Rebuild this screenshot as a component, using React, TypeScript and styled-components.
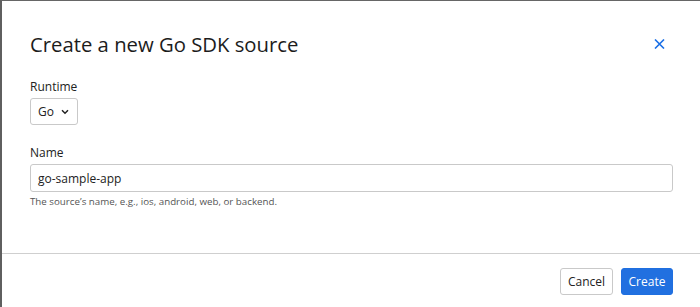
import React from "react";
import styled, { createGlobalStyle } from "styled-components";

const Global = createGlobalStyle`
  html, body { margin: 0; padding: 0; background: #fff; }
  body { font-family: "Open Sans", "Noto Sans", sans-serif; }
  * { box-sizing: border-box; }
`;

const Dialog = styled.div`
  width: 700px;
  height: 307px;
  background: #fff;
  border-top: 1px solid #666;
  border-left: 2px solid #5f5f5f;
  display: flex;
  flex-direction: column;
`;

const Header = styled.div`
  display: flex;
  align-items: center;
  justify-content: space-between;
  padding: 29px 27px 0 28px;
`;

const Title = styled.h2`
  margin: 0;
  font-size: 20.3px;
  line-height: 28px;
  font-weight: 400;
  color: #1c1c1c;
`;

const CloseButton = styled.button`
  width: 24px;
  height: 24px;
  border: none;
  background: transparent;
  padding: 0;
  display: flex;
  align-items: center;
  justify-content: center;
  cursor: pointer;
  margin-right: 2px;
`;

const Body = styled.div`
  flex: 1;
  padding: 20px 27px 0 28px;
  display: flex;
  flex-direction: column;
`;

const Field = styled.div<{ $gap?: number }>`
  display: flex;
  flex-direction: column;
  align-items: flex-start;
  margin-bottom: ${(p) => p.$gap ?? 0}px;
`;

const Label = styled.label`
  font-size: 12px;
  line-height: 18px;
  color: #222;
  margin-bottom: 2px;
`;

const Select = styled.div`
  height: 27px;
  width: 48px;
  border: 1px solid #c9c9c9;
  border-radius: 3px;
  display: flex;
  align-items: center;
  gap: 7px;
  padding-left: 7px;
  font-size: 12px;
  color: #222;
`;

const Input = styled.div`
  height: 28px;
  width: 100%;
  border: 1px solid #c9c9c9;
  border-radius: 3px;
  display: flex;
  align-items: center;
  padding-left: 7px;
  font-size: 12px;
  color: #222;
`;

const Help = styled.div`
  font-size: 9.75px;
  line-height: 14px;
  color: #555;
  margin-top: 3px;
`;

const Footer = styled.div`
  border-top: 1px solid #cfcfcf;
  padding: 14px 27px 12px 0;
  display: flex;
  justify-content: flex-end;
  gap: 8px;
`;

const Button = styled.button<{ $primary?: boolean }>`
  height: 27px;
  width: ${(p) => (p.$primary ? 52 : 53)}px;
  padding: 0;
  border-radius: 3px;
  font-family: inherit;
  font-size: 12px;
  border: 1px solid ${(p) => (p.$primary ? "#1f6fe0" : "#c9c9c9")};
  background: ${(p) => (p.$primary ? "#2170e0" : "#fff")};
  color: ${(p) => (p.$primary ? "#fff" : "#222")};
  cursor: pointer;
`;

export default function App() {
  return (
    <>
      <Global />
      <Dialog>
        <Header>
          <Title>Create a new Go SDK source</Title>
          <CloseButton aria-label="Close">
            <svg width="11" height="10" viewBox="0 0 11 10">
              <path d="M1 0.5 L10 9.5 M10 0.5 L1 9.5" stroke="#1a6fe6" strokeWidth="1.6" fill="none" />
            </svg>
          </CloseButton>
        </Header>
        <Body>
          <Field $gap={19}>
            <Label>Runtime</Label>
            <Select>
              <span>Go</span>
              <svg width="8" height="6" viewBox="0 0 8 6">
                <path d="M1 1.2 L4 4.2 L7 1.2" stroke="#222" strokeWidth="1.5" fill="none" />
              </svg>
            </Select>
          </Field>
          <Field>
            <Label>Name</Label>
            <Input>go-sample-app</Input>
            <Help>The source’s name, e.g., ios, android, web, or backend.</Help>
          </Field>
        </Body>
        <Footer>
          <Button>Cancel</Button>
          <Button $primary>Create</Button>
        </Footer>
      </Dialog>
    </>
  );
}
